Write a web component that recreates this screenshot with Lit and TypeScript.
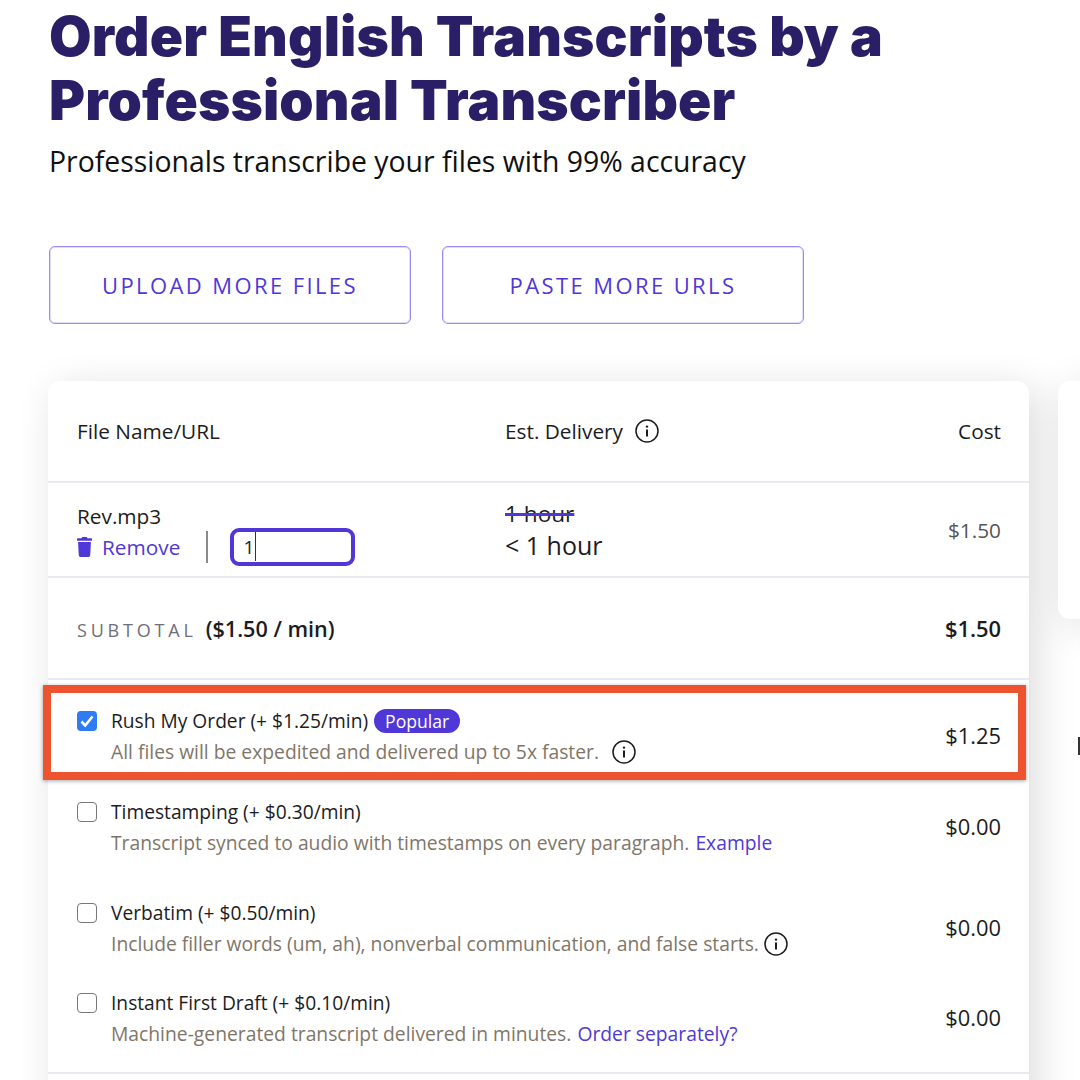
import { LitElement, html, css, svg } from "lit";
import { customElement } from "lit/decorators.js";

const info = html`<svg class="info" viewBox="0 0 24 24" aria-hidden="true"><circle cx="12" cy="12" r="11" fill="none" stroke="#1c1c1e" stroke-width="1.5"/><circle cx="12" cy="7.6" r="1.2" fill="#1c1c1e"/><rect x="11" y="10.5" width="2" height="7" fill="#1c1c1e"/></svg>`;
const trash = html`<svg class="trash" viewBox="0 0 448 512" preserveAspectRatio="none" aria-hidden="true"><path fill="#5038d8" d="M432 32H312l-9.4-18.7A24 24 0 0 0 281.1 0H166.8a23.72 23.72 0 0 0-21.4 13.3L136 32H16A16 16 0 0 0 0 48v32a16 16 0 0 0 16 16h416a16 16 0 0 0 16-16V48a16 16 0 0 0-16-16zM53.2 467a48 48 0 0 0 47.9 45h245.8a48 48 0 0 0 47.9-45L416 128H32z"/></svg>`;
const check = svg`<path d="M4.5 10.5 8.2 14.5 15.5 5.5" fill="none" stroke="#fff" stroke-width="2.6"/>`;

@customElement("app-root")
export class AppRoot extends LitElement {
  static styles = css`
    :host { display: block; width: 1080px; height: 1080px; overflow: hidden; background: #fff; font-family: "Open Sans", sans-serif; color: #1c1c1e; }
    .page { padding: 5px 0 0 49px; }
    h1 { margin: 0; font-family: Inter, sans-serif; font-weight: 900; font-size: 55px; line-height: 63.5px; color: #2a1f66; letter-spacing: 0.13px; white-space: nowrap; }
    .sub { margin: 9px 0 0; font-size: 28.4px; line-height: 40px; color: #111; white-space: nowrap; }
    .buttons { display: flex; gap: 31px; margin-top: 65px; }
    .btn { width: 362px; height: 78px; box-sizing: border-box; border: 1px solid #9a8cf0; box-shadow: inset 0 0 0 1px rgba(154,140,240,.3); border-radius: 6px; display: flex; align-items: center; justify-content: center; color: #5038d8; font-size: 22px; font-weight: 500; letter-spacing: 2.4px; }
    .columns { display: flex; gap: 29px; margin: 57px 0 0 -1px; align-items: flex-start; }
    .card { flex: none; width: 981px; background: #fff; border-radius: 12px; box-shadow: 8px 8px 40px rgba(0,0,0,.14); font-size: 20.8px; height: 800px; }
    .side { flex: none; width: 200px; }
    .aside { height: 238px; background: #fff; border-radius: 12px; box-shadow: 6px 6px 40px rgba(0,0,0,.12); }
    .clip { width: 2px; height: 18px; margin: 118px 0 0 20px; background: #333; }
    .row { display: flex; align-items: center; justify-content: space-between; padding: 0 28px 0 29px; border-bottom: 2px solid #e9e9ef; box-sizing: border-box; }
    .head { height: 102px; }
    .col-name { width: 428px; flex: none; }
    .col-del { flex: 1; display: flex; align-items: center; gap: 12px; }
    .info { width: 24px; height: 24px; flex: none; display: block; }
    .file { height: 95px; }
    .file-info { padding-top: 7px; }
    .file-name { line-height: 30px; }
    .actions { display: flex; align-items: center; margin-top: -3px; }
    .remove { display: flex; align-items: center; gap: 10px; color: #5038d8; width: 129px; flex: none; }
    .trash { width: 15px; height: 20px; }
    .sep { width: 1.5px; height: 32px; background: #8a8a8a; flex: none; margin-right: 22px; }
    .qty { width: 125px; height: 38px; box-sizing: border-box; border: 4px solid #5038d8; border-radius: 9px; display: flex; align-items: center; padding-left: 10px; font-size: 19px; background: #fff; }
    .caret { width: 1px; height: 29px; background: #333; margin-left: 1px; }
    .del { display: block; padding-top: 7px; }
    .old { font-size: 22.6px; line-height: 24px; text-decoration: line-through; text-decoration-color: #5038d8; text-decoration-thickness: 2.5px; }
    .new { font-size: 25px; line-height: 38px; }
    .cost-sm { color: #555; }
    .subtotal { height: 102px; font-size: 21.6px; }
    .sub-left { display: flex; align-items: baseline; gap: 9px; }
    .sub-label { font-size: 18px; letter-spacing: 3.8px; color: #6e6e78; }
    .strong { font-weight: 600; }
    .sub-total { font-size: 21.9px; font-weight: 600; }
    .opt { display: flex; justify-content: space-between; align-items: center; padding: 0 28px 0 29px; }
    .opt-main { display: grid; grid-template-columns: 34px auto; row-gap: 0; align-items: center; }
    .box { width: 20px; height: 20px; box-sizing: border-box; border: 1.5px solid #777; border-radius: 4px; background: #fff; display: block; }
    .box.on { background: #2f7bf5; border: none; }
    .title { font-size: 19.2px; line-height: 31px; display: flex; align-items: center; gap: 6px; white-space: nowrap; }
    .desc { grid-column: 2; font-size: 19.3px; line-height: 31px; color: #7f7668; display: flex; align-items: center; gap: 5px; white-space: nowrap; }
    .desc a { color: #5038d8; text-decoration: none; margin-left: 1px; }
    .far { margin-left: 8px; }
    .pill { background: #5038d8; color: #fff; font-size: 17.6px; line-height: 24px; padding: 0 11px; border-radius: 12px; }
    .price { font-size: 21.9px; margin-bottom: 1px; }
    .wrap { position: relative; }
    .r1 { padding-top: 25px; }
    .r2 { padding-top: 29px; }
    .r3 { padding-top: 39px; }
    .r4 { padding-top: 28px; padding-bottom: 23px; border-bottom: 2px solid #e9e9ef; }
    .mark { position: absolute; left: -5px; top: 5px; width: 983px; height: 95px; box-sizing: border-box; border: 8px solid #ee5330; box-shadow: 0 1px 4px rgba(0,0,0,.35); pointer-events: none; }
  `;

  private opt(cls: string, on: boolean, title: unknown, desc: unknown, price: string) {
    return html`<div class="opt ${cls}">
      <div class="opt-main">
        <svg class="box ${on ? "on" : ""}" viewBox="0 0 20 20" aria-hidden="true">${on ? check : ""}</svg>
        <div class="title">${title}</div>
        <div class="desc">${desc}</div>
      </div>
      <div class="price">${price}</div>
    </div>`;
  }

  render() {
    return html`<div class="page">
      <h1>Order English Transcripts by a<br />Professional Transcriber</h1>
      <p class="sub">Professionals transcribe your files with 99% accuracy</p>
      <div class="buttons">
        <div class="btn">UPLOAD MORE FILES</div>
        <div class="btn">PASTE MORE URLS</div>
      </div>
      <div class="columns">
        <div class="card">
          <div class="row head">
            <div class="col-name">File Name/URL</div>
            <div class="col-del">Est. Delivery ${info}</div>
            <div>Cost</div>
          </div>
          <div class="row file">
            <div class="col-name file-info">
              <div class="file-name">Rev.mp3</div>
              <div class="actions">
                <div class="remove">${trash} Remove</div>
                <div class="sep"></div>
                <div class="qty">1<span class="caret"></span></div>
              </div>
            </div>
            <div class="col-del del"><div class="old">1 hour</div><div class="new">&lt; 1 hour</div></div>
            <div class="cost-sm">$1.50</div>
          </div>
          <div class="row subtotal">
            <div class="sub-left"><span class="sub-label">SUBTOTAL</span><span class="strong">($1.50 / min)</span></div>
            <div class="sub-total">$1.50</div>
          </div>
          <div class="wrap">
            <div class="mark"></div>
            ${this.opt("r1", true, html`Rush My Order (+ $1.25/min) <span class="pill">Popular</span>`, html`All files will be expedited and delivered up to 5x faster.<span class="far">${info}</span>`, "$1.25")}
            ${this.opt("r2", false, "Timestamping (+ $0.30/min)", html`Transcript synced to audio with timestamps on every paragraph. <a>Example</a>`, "$0.00")}
            ${this.opt("r3", false, "Verbatim (+ $0.50/min)", html`Include filler words (um, ah), nonverbal communication, and false starts. ${info}`, "$0.00")}
            ${this.opt("r4", false, "Instant First Draft (+ $0.10/min)", html`Machine-generated transcript delivered in minutes. <a>Order separately?</a>`, "$0.00")}
          </div>
        </div>
        <div class="side">
          <div class="aside"></div>
          <div class="clip"></div>
        </div>
      </div>
    </div>`;
  }
}
